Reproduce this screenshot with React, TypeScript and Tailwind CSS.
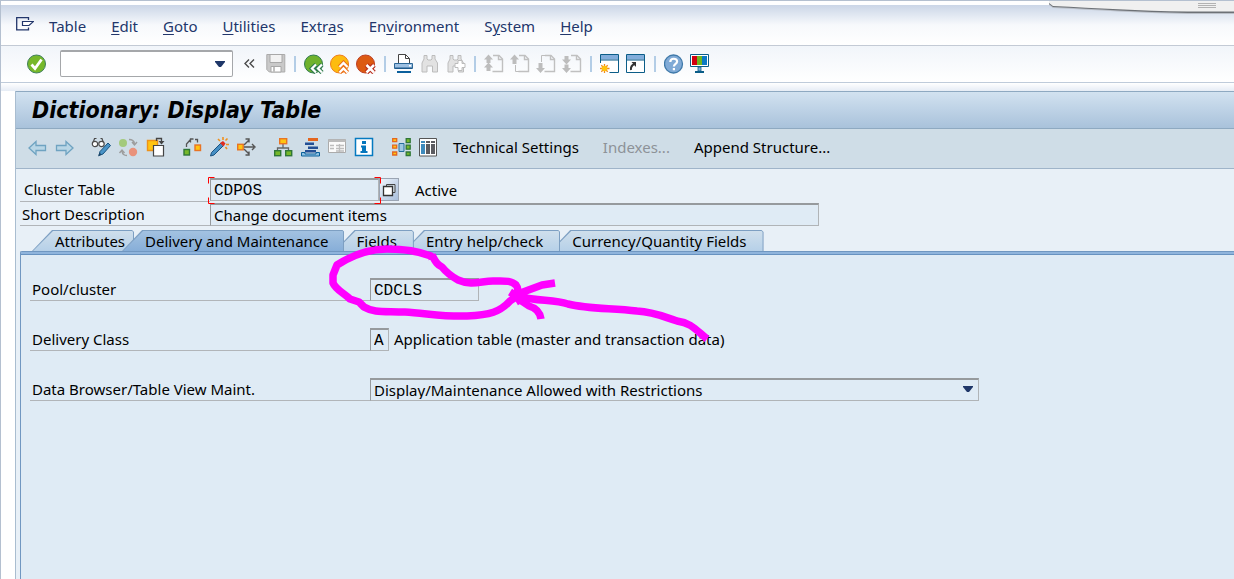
import React from "react";

type IconProps = { children: React.ReactNode };

function Glyph({ children }: IconProps) {
  return (
    <svg viewBox="0 0 20 20" className="block h-5 w-5 shrink-0" aria-hidden="true">
      {children}
    </svg>
  );
}

function IconButton({ label, disabled, children }: { label: string; disabled?: boolean; children: React.ReactNode }) {
  return (
    <button type="button" aria-label={label} disabled={disabled} className="h-5 w-5 shrink-0">
      <Glyph>{children}</Glyph>
    </button>
  );
}

function Separator() {
  return (
    <span className="flex w-[6px] shrink-0 justify-center">
      <span className="h-4 w-[2px] bg-[#b3cde6]" />
    </span>
  );
}

const docOutline = "M9 1.500h6l3.500 3.500v12.500h-10";

function PageDoc() {
  return (
    <g fill="none" stroke="#c0c0c0" strokeWidth="1.400">
      <path d={docOutline} />
      <path d="M14.500 1.500v4h4" />
    </g>
  );
}

const upArrow = "M4.500 0.500L9 5.500H6.500V9h-4V5.500H0z";

function Binoculars() {
  return (
    <path
      d="M4 1.500h3v3.500l1 1h3l1-1v-3.500h3v3.500l2.500 4v9h-5v-6h-5.500v6h-5v-9L4 5z"
      fill="#e2e2e2"
      stroke="#bcbcbc"
    />
  );
}

function MainToolbar() {
  return (
    <div className="flex h-[37px] items-center border-b border-[#bfcbda] bg-linear-to-b from-[#f1f5fa] to-white pb-px pl-[25px]">
      <IconButton label="Enter">
        <circle cx="10.500" cy="10" r="9" fill="#76b82a" stroke="#3f7f5a" />
        <path d="M5.500 10.500l3.500 4 6.500-9" fill="none" stroke="#fff" strokeWidth="2.800" />
      </IconButton>
      <div className="ml-[14px] flex h-[27px] w-[173px] items-center rounded-[2px] border border-t-2 border-[#a5a7aa] bg-white">
        <input aria-label="Command" className="h-full min-w-0 flex-1 bg-transparent px-1 outline-none" />
        <button type="button" aria-label="Command history" className="mr-[7px]">
          <svg viewBox="0 0 10 6" className="h-[6px] w-[10px]">
            <path d="M0 0h10v1L6 6H4L0 1z" fill="#1f3769" />
          </svg>
        </button>
      </div>
      <div className="ml-[7px] flex items-center gap-[6px]">
        <IconButton label="Collapse command field">
          <path d="M9 5.500L5 9.500l4 4M14 5.500l-4 4 4 4" fill="none" stroke="#4b4b4b" strokeWidth="1.400" />
        </IconButton>
        <IconButton label="Save" disabled>
          <path d="M0.800 0.500h18v17.500h-15.500l-2.500-2.500z" fill="#c9c9c9" stroke="#ababab" />
          <path d="M4 0.500h12v8H4z" fill="#f2f2f2" stroke="#a8a8a8" />
          <path d="M5 12.500h10v5.500H5z" fill="#fff" stroke="#a8a8a8" />
          <path d="M7 13h2v5H7z" fill="#c0c0c0" />
        </IconButton>
        <Separator />
        <IconButton label="Back">
          <circle cx="9.500" cy="10" r="9" fill="#6fb22c" stroke="#2f7b4c" />
          <path d="M12 10.500l-4 4 4 4M18 10.500l-4 4 4 4" fill="none" stroke="#2f7b4c" strokeWidth="4.500" />
          <path d="M12 10.500l-4 4 4 4M18 10.500l-4 4 4 4" fill="none" stroke="#fff" strokeWidth="2.300" />
        </IconButton>
        <IconButton label="Exit">
          <circle cx="9.500" cy="10" r="9" fill="#fdbc0e" stroke="#ef7d17" />
          <path d="M9.500 13l4-4 4 4M9.500 18.500l4-4 4 4" fill="none" stroke="#ec7018" strokeWidth="4.500" />
          <path d="M9.500 13l4-4 4 4M9.500 18.500l4-4 4 4" fill="none" stroke="#fff" strokeWidth="2.300" />
        </IconButton>
        <IconButton label="Cancel">
          <circle cx="9.500" cy="10" r="9" fill="#dc5a12" stroke="#bd3d20" />
          <path d="M10.500 11l7.500 7.500M18 11l-7.500 7.500" stroke="#b92d1c" strokeWidth="4.800" />
          <path d="M10.500 11l7.500 7.500M18 11l-7.500 7.500" stroke="#fff" strokeWidth="2.500" />
        </IconButton>
        <Separator />
        <IconButton label="Print">
          <path d="M4.500 9V0.500h7l4 4V9" fill="#fff" stroke="#444" />
          <path d="M11.500 0.500v4h4" fill="none" stroke="#444" />
          <path d="M0.500 9.500h18v5h-18z" fill="#9dc0e2" stroke="#2c6797" />
          <path d="M1 13.500h17v1.500H1z" fill="#1f5a8c" />
          <path d="M15 11h2v1.500h-2z" fill="#fff" />
          <path d="M3 17h14v2H3z" fill="#0a5f9c" />
        </IconButton>
        <IconButton label="Find" disabled>
          <Binoculars />
        </IconButton>
        <IconButton label="Find next" disabled>
          <Binoculars />
          <path d="M12 6.500h4v3h3v4h-3v3h-4v-3h-3v-4h3z" fill="#fff" stroke="#bcbcbc" />
        </IconButton>
        <Separator />
        <IconButton label="First page" disabled>
          <PageDoc />
          <path d={upArrow} fill="#bdbdbd" />
          <path d={upArrow} transform="translate(0 8)" fill="#bdbdbd" />
        </IconButton>
        <IconButton label="Previous page" disabled>
          <PageDoc />
          <path d="M5.500 11v6.500h4" fill="none" stroke="#bdbdbd" />
          <path d="M4.500 0.500L9 5.500H6.500V10h-4V5.500H0z" fill="#bdbdbd" />
        </IconButton>
        <IconButton label="Next page" disabled>
          <PageDoc />
          <path d="M5.500 8V1.500h4" fill="none" stroke="#bdbdbd" />
          <path d="M4.500 19L9 14H6.500V9h-4v5H0z" fill="#bdbdbd" />
        </IconButton>
        <IconButton label="Last page" disabled>
          <PageDoc />
          <path d={upArrow} transform="matrix(1 0 0 -1 0 11)" fill="#bdbdbd" />
          <path d={upArrow} transform="matrix(1 0 0 -1 0 19.500)" fill="#bdbdbd" />
        </IconButton>
        <Separator />
        <IconButton label="New session">
          <path d="M0.500 0.500h18v18h-18z" fill="#fff" stroke="#0b5d88" />
          <path d="M1 1h17v4.500H1z" fill="#82addb" />
          <path d="M0.500 6h18" stroke="#0b5d88" />
          <path d="M0 9h9.500v10H0z" fill="#fff" />
          <path d="M4.500 10v9M0 14.500h9.500M1.300 11.300l6.400 6.400M7.700 11.300l-6.400 6.400" stroke="#f08a1b" strokeWidth="1.300" />
          <circle cx="4.500" cy="14.500" r="2.800" fill="#ffc30f" />
        </IconButton>
        <IconButton label="Create shortcut">
          <path d="M0.500 0.500h18v18h-18z" fill="#fff" stroke="#0b5d88" />
          <path d="M1 1h17v4.500H1z" fill="#82addb" />
          <path d="M0.500 6h18" stroke="#0b5d88" />
          <path d="M5 16c-.5-3.500 1-5 3.500-6" fill="none" stroke="#333" strokeWidth="2" />
          <path d="M5.500 8H10v5z" fill="#333" />
        </IconButton>
        <Separator />
        <IconButton label="Help">
          <circle cx="9.500" cy="10" r="9" fill="#80aad6" stroke="#3f79a9" strokeWidth="1.300" />
          <path
            d="M6.300 8c0-4.200 6.800-4.200 6.800-.6 0 2.400-3.200 2.400-3.200 5M9.900 14v2.200"
            fill="none"
            stroke="#fff"
            strokeWidth="2.200"
          />
        </IconButton>
        <IconButton label="Customize layout">
          <path d="M0.500 0.500h18v12h-18z" fill="#fff" stroke="#0b5d88" />
          <path d="M2 2h5v9H2z" fill="#d1000f" />
          <path d="M7 2h5v9H7z" fill="#70b51f" />
          <path d="M12 2h5v9h-5z" fill="#0a79c4" />
          <path d="M8 13h3v4H8z" fill="#82addb" stroke="#0b5d88" strokeWidth=".8" />
          <path d="M5 17h9v2H5z" fill="#0b5d88" />
        </IconButton>
      </div>
    </div>
  );
}

const menus: [string, string, string][] = [
  ["Table", "", ""],
  ["", "E", "dit"],
  ["", "G", "oto"],
  ["", "U", "tilities"],
  ["Extr", "a", "s"],
  ["En", "v", "ironment"],
  ["S", "y", "stem"],
  ["", "H", "elp"],
];

function MenuBar() {
  return (
    <nav className="flex h-[41px] items-center border-b border-[#c3cad5] bg-linear-to-b from-[#cbd6e7] via-[#f7f9fc] via-50% to-white pl-[15px] pt-[2px] text-[#22366b]">
      <button type="button" aria-label="Window menu" className="mb-1">
        <svg viewBox="0 0 18 14" className="h-[14px] w-[18px]">
          <path d="M12.500 3V0.700H.7v12.100h11.800V10.500" fill="none" stroke="#22366b" strokeWidth="1.300" />
          <path d="M6.500 4.500h11L13 8.500H6.500z" fill="#fff" stroke="#22366b" strokeWidth="1.200" />
        </svg>
      </button>
      <div className="ml-[15px] flex gap-[25px]">
        {menus.map(([before, key, after]) => (
          <button type="button" key={before + key + after}>
            {before}
            <span className="underline underline-offset-2">{key}</span>
            {after}
          </button>
        ))}
      </div>
    </nav>
  );
}

function Node({ x, y, fill, stroke }: { x: number; y: number; fill: string; stroke: string }) {
  return <rect x={x} y={y} width="5.500" height="5.500" fill={fill} stroke={stroke} strokeWidth="1.400" />;
}

function AppToolbar() {
  return (
    <div className="flex h-10 items-center gap-[17px] border-b border-[#9fb4c9] bg-[#cfdde7] pb-[3px] pl-[11px]">
      <div className="flex gap-[7px]">
        <IconButton label="Previous object">
          <path d="M2 11l7-6.500v4h9.500v5H9v4z" fill="#b9d6e6" stroke="#6fa3c1" strokeWidth="1.300" />
        </IconButton>
        <IconButton label="Next object">
          <path d="M19 11l-7-6.500v4H2.500v5H12v4z" fill="#b9d6e6" stroke="#6fa3c1" strokeWidth="1.300" />
        </IconButton>
      </div>
      <div className="flex gap-[7px]">
        <IconButton label="Display and change">
          <g fill="#fff" stroke="#4a4a4a" strokeWidth="1.200">
            <path d="M2 6L3.500 1.500h2M12.500 6L11 1.500H9.500" fill="none" />
            <circle cx="4" cy="7" r="2.700" />
            <circle cx="10.500" cy="7" r="2.700" />
          </g>
          <path d="M8 18.500l1-4L17 6l2.500 2.500L12 17z" fill="#4a94c7" stroke="#17537f" />
          <path d="M7 19.500l1.500-4 2 2z" fill="#1e4668" />
        </IconButton>
        <IconButton label="Active and inactive">
          <circle cx="5" cy="6" r="4" fill="#a3ca7c" />
          <circle cx="15" cy="15" r="4.200" fill="#e9927b" />
          <path d="M11 2.500c3 0 5 1 5.500 4M14 5l2.500 3L19 5M9 18.500c-3 0-4.500-1-5-4M1.500 16L4 13l2.500 3" fill="none" stroke="#9c9c9c" strokeWidth="1.400" />
        </IconButton>
        <IconButton label="Other object">
          <path d="M2.500 3.500h10v10h-10z" fill="#ffc411" stroke="#ee9218" strokeWidth="1.400" />
          <path d="M8.500 8.500h10v10.500h-10z" fill="#fff" stroke="#444" strokeWidth="1.200" />
          <path d="M11.500 4V1.500h5V4" fill="none" stroke="#444" strokeWidth="1.300" />
          <path d="M13.500 4h6l-3 3.500z" fill="#444" />
        </IconButton>
      </div>
      <div className="flex gap-[7px]">
        <IconButton label="Check">
          <Node x={2} y={12.500} fill="#76b82a" stroke="#2f7637" />
          <Node x={13} y={8} fill="#ffc411" stroke="#e87424" />
          <path d="M4.500 10V7l4-4.500M8.500 5.500V2h3M13 2.500h2.500v3" fill="none" stroke="#555" strokeWidth="1.300" />
        </IconButton>
        <IconButton label="Activate">
          <path d="M1.500 19l1-3.500L12 6l2.500 2.500L5 18z" fill="#468fc4" stroke="#1b5380" />
          <path d="M11 6l3-2 2.500 2.500-2 3z" fill="#e02c20" />
          <path d="M9 2l2 2M14 0v3M18.500 1.500l-2 2M20 7.500h-3M18 12l-1.500-2" stroke="#f0901d" strokeWidth="1.600" />
        </IconButton>
        <IconButton label="Where-used list">
          <Node x={1.700} y={7.300} fill="#ffc411" stroke="#e87424" />
          <path d="M8 10h10M8 8l5-5M8 12l5 5M16 7l3 3-3 3M9.500 2H13v3.500M9.500 18H13v-3.500" fill="none" stroke="#555" strokeWidth="1.400" />
        </IconButton>
      </div>
      <div className="flex gap-[7px]">
        <IconButton label="Display object list">
          <path d="M10 7v4M4.500 14v-3h11v3" fill="none" stroke="#666" strokeWidth="1.300" />
          <rect x="6.700" y="1.700" width="7" height="5" fill="#ffc411" stroke="#e87424" strokeWidth="1.400" />
          <rect x="1.700" y="13.700" width="6" height="5" fill="#76b82a" stroke="#2f7637" strokeWidth="1.400" />
          <rect x="12.700" y="13.700" width="6" height="5" fill="#76b82a" stroke="#2f7637" strokeWidth="1.400" />
        </IconButton>
        <IconButton label="Display hierarchy">
          <path d="M8 1h10v3H8z" fill="#e4661f" />
          <path d="M5 5.500h9v2.500H5zM8 9.500h10V12H8zM5 13h11v2.500H5z" fill="#234f94" />
          <path d="M1.500 15.500H5V17h11v-1.500h3.500V19h-18z" fill="#8ec1e2" stroke="#0a619b" />
        </IconButton>
        <IconButton label="Table contents" disabled>
          <path d="M1.500 2.500h17v13h-17z" fill="#fbfbfb" stroke="#ababab" />
          <path d="M1.500 2.500h17v2.500h-17z" fill="#bcbcbc" />
          <path d="M3 8.500h4M3 11.500h4M9 8.500h8M9 11.500h8M9 14h8M12.500 7v8" stroke="#bdbdbd" strokeWidth="1.300" />
        </IconButton>
        <IconButton label="Documentation">
          <path d="M1.500 1.500h17v17h-17z" fill="#fff" stroke="#057ac0" strokeWidth="1.500" />
          <path d="M8 4h4v3H8zM7 8.500h5V14h1.500v2h-7v-2H8v-3.500H7z" fill="#0677bd" />
        </IconButton>
      </div>
      <div className="flex gap-[7px]">
        <IconButton label="Append fields">
          <g fill="#ffc411" stroke="#e4661f" strokeWidth="1.300">
            <path d="M1.700 1.700h4v3h-4zM1.700 8.200h4v3h-4zM1.700 15h4v3h-4z" />
          </g>
          <path d="M8 6.500h5v8H8z" fill="#9ec8e3" stroke="#246e9c" />
          <g fill="#76b82a" stroke="#2f7637" strokeWidth="1.300">
            <path d="M15.200 1.700h4v4h-4zM15.200 8.200h4v4h-4zM15.200 15h4v3.500h-4z" />
          </g>
        </IconButton>
        <IconButton label="Contents">
          <path d="M1.500 1.500h17v17.500h-17z" fill="#fff" stroke="#555" />
          <path d="M3 4h4v2H3zM3 7h4v10H3z" fill="#3d8abc" />
          <path d="M8 4h4v2H8zM8 7h4v10H8zM13 4h4v2h-4zM13 7h4v10h-4z" fill="#5b5b60" />
        </IconButton>
      </div>
      <div className="-ml-[2px] flex gap-6">
        <button type="button">Technical Settings</button>
        <button type="button" disabled className="text-[#8d9298]">
          Indexes...
        </button>
        <button type="button">Append Structure...</button>
      </div>
    </div>
  );
}

const fieldStyle =
  "h-[23px] border border-t-2 border-[#b0b4b7] border-t-[#969a9d] border-l-[#969a9d] bg-[#dfebf5] px-[3px] outline-none";

const codeText = "pt-[2px] font-['Liberation_Mono',monospace] text-[16px]";

function HeaderFields() {
  return (
    <div className="flex flex-col gap-px pl-1 pt-[9px]">
      <div className="flex">
        <label htmlFor="table-name" className="w-[190px] border-b border-[#b1b5b9] pl-1 leading-[23px]">
          Cluster Table
        </label>
        <div className="relative flex">
          <input id="table-name" readOnly defaultValue="CDPOS" className={`${fieldStyle} w-[169px] ${codeText}`} />
          <svg
            viewBox="0 0 174 27"
            className="pointer-events-none absolute -left-[2px] -top-px z-10 h-[27px] w-[174px]"
            fill="none"
            aria-hidden="true"
          >
            <path d="M6.500 0.500H0.500V6.500M0.500 20.500V26.500H6.500M166.500 0.500H172.500V6.500M172.500 20.500V26.500H166.500" stroke="#ff0000" />
          </svg>
        </div>
        <button
          type="button"
          aria-label="Choose table"
          className="flex h-[23px] w-5 items-center justify-center border border-[#9ba5b3] bg-linear-to-br from-[#f0f5fb] to-[#a9bfdc]"
        >
          <svg viewBox="0 0 14 14" className="h-[14px] w-[14px]" aria-hidden="true">
            <path d="M4.500 1.500h8.500v8h-8.500z" fill="#d4e0e8" stroke="#444" />
            <path d="M1.500 3.500h9v9h-9z" fill="#fff" stroke="#333" strokeWidth="1.300" />
          </svg>
        </button>
        <output className="ml-4 leading-[24px]">Active</output>
      </div>
      <div className="flex">
        <label htmlFor="description" className="w-[190px] border-b border-[#b1b5b9] pl-[2px] leading-[22px]">
          Short Description
        </label>
        <input id="description" readOnly defaultValue="Change document items" className={`${fieldStyle} w-[609px]`} />
      </div>
    </div>
  );
}

type TabInfo = { name: string; active?: boolean; box: string };

const tabs: TabInfo[] = [
  { name: "Attributes", box: "z-40 pl-[23px] pr-[9px]" },
  { name: "Delivery and Maintenance", active: true, box: "z-50 -ml-3 pl-[23px] pr-4" },
  { name: "Fields", box: "z-30 -ml-[10px] pl-[22px] pr-[17px]" },
  { name: "Entry help/check", box: "z-20 -ml-[10px] pl-[22px] pr-[17px]" },
  { name: "Currency/Quantity Fields", box: "z-10 -ml-[10px] pl-[22px] pr-[17px]" },
];

function Tabs() {
  return (
    <div role="tablist" className="mt-1 flex pl-4">
      {tabs.map((tab) => (
        <button
          type="button"
          role="tab"
          aria-selected={!!tab.active}
          key={tab.name}
          className={`relative isolate h-[21px] whitespace-nowrap leading-[23px] ${tab.box}`}
        >
          <span className="absolute inset-0 -z-20 bg-[#7d9fc2] [clip-path:polygon(20px_0,calc(100%-2px)_0,100%_2px,100%_100%,0_100%)]" />
          <span
            className={`absolute inset-px bottom-0 -z-10 [clip-path:polygon(20px_0,calc(100%-1px)_0,100%_1px,100%_100%,0_100%)] ${
              tab.active ? "bg-linear-to-b from-[#a3c2e1] to-[#87aed8]" : "bg-linear-to-b from-[#cfdfec] to-[#b6d0e8]"
            }`}
          />
          {tab.name}
        </button>
      ))}
    </div>
  );
}

const panelLabel = "w-[340px] border-b border-[#b1b5b9] pl-[2px] leading-[22px]";

function MaintenancePanel() {
  return (
    <section className="ml-1 flex flex-1 flex-col rounded-tl-[2px] border-l border-t border-[#7097c1] bg-[#dfebf5]">
      <div className="h-[3px] border-b border-[#6792c0] bg-[#8fb4dc]" />
      <div className="flex flex-col gap-[27px] pl-[9px] pt-[23px]">
        <div className="flex">
          <label htmlFor="pool" className={panelLabel}>
            Pool/cluster
          </label>
          <input id="pool" readOnly defaultValue="CDCLS" className={`${fieldStyle} w-[109px] ${codeText}`} />
        </div>
        <div className="flex">
          <label htmlFor="delivery" className={panelLabel}>
            Delivery Class
          </label>
          <input id="delivery" readOnly defaultValue="A" className={`${fieldStyle} w-[19px] ${codeText}`} />
          <output htmlFor="delivery" className="ml-[5px] leading-[22px]">
            Application table (master and transaction data)
          </output>
        </div>
        <div className="flex">
          <label htmlFor="maintenance" className={panelLabel}>
            Data Browser/Table View Maint.
          </label>
          <div className="relative flex">
            <select id="maintenance" className={`${fieldStyle} w-[609px] appearance-none leading-[18px]`}>
              <option>Display/Maintenance Allowed with Restrictions</option>
            </select>
            <svg viewBox="0 0 10 6" className="pointer-events-none absolute right-[6px] top-2 h-[6px] w-[10px]" aria-hidden="true">
              <path d="M0 0h10v1L6 6H4L0 1z" fill="#1f3769" />
            </svg>
          </div>
        </div>
      </div>
    </section>
  );
}

function HandDrawnMark() {
  return (
    <svg
      viewBox="320 240 400 110"
      className="pointer-events-none absolute left-[319px] top-[239px] z-50 h-[110px] w-[400px]"
      fill="none"
      stroke="#ff00ff"
      strokeWidth="7.500"
      strokeLinejoin="round"
      aria-hidden="true"
    >
      <path d="M432 259L431 256C418 251 402 249 387 249C368 249 351 256 337 265L333 275V283C336 290 344 293 350 299L359 302L364 307C374 313 385 311 405 312C425 313 444 317 467 316C490 315 500 312 510 301C517 297 520 290 516 285C511 280 504 281 493 281C481 281 472 286 458 280C449 275 446 272 442 267C438 265 436 263 432 255" />
      <path d="M555 283L542 285L515 295M510 297H520C540 301 555 300 568 304C588 309 610 308 637 311C655 312 664 317 677 321C691 323 695 329 707 339" />
      <path d="M514 296L529 306C536 308 540 312 541 319" />
      <path d="M510 292L521 299L516 302" />
    </svg>
  );
}

function WindowHandle() {
  return (
    <svg viewBox="0 0 186 14" className="absolute right-0 top-0 h-[14px] w-[186px]" aria-hidden="true">
      <path d="M1 0v4l4 3C50 9 90 12 140 13h46V0z" fill="#b9bec6" />
      <path d="M1 0v3l4 3C50 8 90 11 140 12h46V0z" fill="#6d7176" />
      <path d="M1 0v2l4 3C50 7 90 10 140 10.500h46V0z" fill="#f0f0f0" />
      <path d="M150 2.500h18M150 4.500h18M150 6.500h18" stroke="#b2b2b2" />
    </svg>
  );
}

export default function App() {
  return (
    <div className="relative flex min-h-screen flex-col overflow-hidden border-l border-t border-[#b4c0d0] bg-white pt-1 font-['Noto_Sans',sans-serif] text-[15px] leading-5 text-black">
      <MenuBar />
      <MainToolbar />
      <div className="h-[8px] bg-linear-to-b from-white to-[#e6ecf5]" />
      <main className="ml-[14px] flex flex-1 flex-col border-l border-[#a9bdd0] bg-[#e8f0f7]">
        <h1 className="flex h-[38px] items-center border-y border-[#8ea9c1] bg-linear-to-b from-[#d2e2f0] to-[#a9c2db] pb-px pl-4 font-['DejaVu_Sans_Condensed','DejaVu_Sans',sans-serif] text-[23px] font-bold italic">
          Dictionary: Display Table
        </h1>
        <AppToolbar />
        <HeaderFields />
        <Tabs />
        <MaintenancePanel />
      </main>
      <HandDrawnMark />
      <WindowHandle />
    </div>
  );
}
